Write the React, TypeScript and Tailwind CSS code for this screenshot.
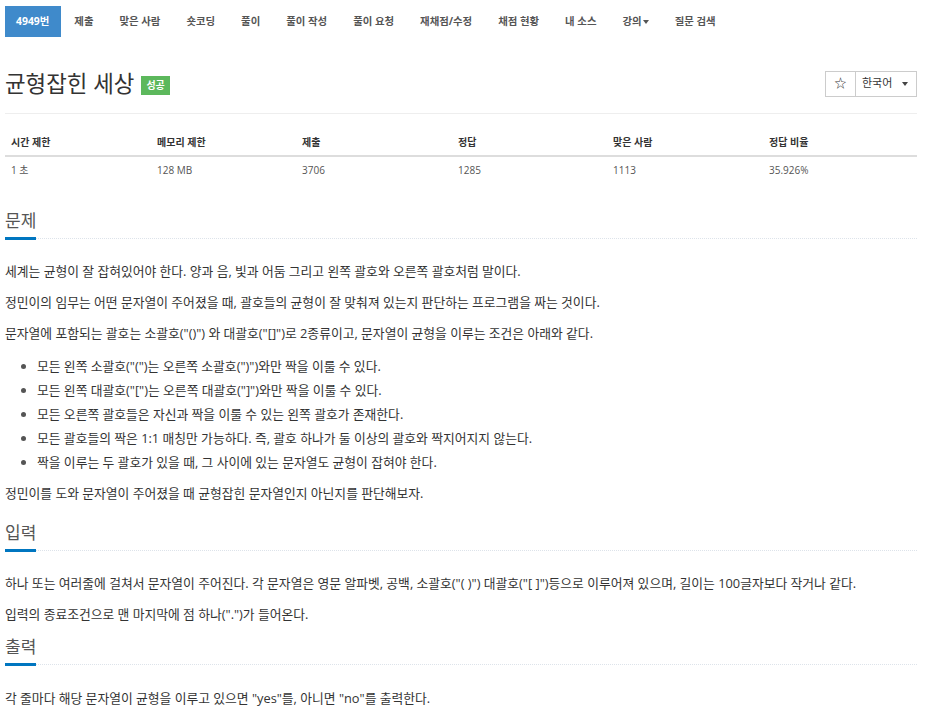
import React from "react";

const navItems = ["제출", "맞은 사람", "숏코딩", "풀이", "풀이 작성", "풀이 요청", "재채점/수정", "채점 현황", "내 소스"];

function Heading({ title, className }: { title: string; className: string }) {
  return (
    <div className={`flex border-b border-dotted border-[#dde3ea] ${className}`}>
      <div className="-mb-[2px] border-b-[3px] border-[#0076c0] pb-[4px] text-[17px] leading-[24px] text-[#555]">
        {title}
      </div>
    </div>
  );
}

export default function App() {
  const cols = ["w-[146px]", "w-[145px]", "w-[156px]", "w-[155px]", "w-[156px]", "flex-1"];
  const heads = ["시간 제한", "메모리 제한", "제출", "정답", "맞은 사람", "정답 비율"];
  const vals = ["1 초", "128 MB", "3706", "1285", "1113", "35.926%"];
  return (
    <div className="min-h-[709px] bg-white px-[5px] pr-[10px] font-['Open_Sans','Noto_Sans_CJK_KR',sans-serif] text-[#333]">
      {/* nav */}
      <div className="flex items-center pt-[6px]">
        <div className="flex h-[31px] items-center bg-[#3f8acb] pl-[11px] pr-[12px] text-[10.4px] font-bold text-white">4949번</div>
        {navItems.map((n) => (
          <div key={n} className="px-[13px] text-[10.4px] font-bold text-[#555]">
            {n}
          </div>
        ))}
        <div className="flex items-center px-[13px] text-[10.4px] font-bold text-[#555]">
          강의
          <span className="ml-[1px] mt-[1px] h-0 w-0 border-x-[3px] border-t-[4px] border-x-transparent border-t-[#555]" />
        </div>
        <div className="px-[13px] text-[10.4px] font-bold text-[#555]">질문 검색</div>
      </div>

      {/* title */}
      <div className="mt-[33px] flex h-[27px] items-center justify-between">
        <div className="flex items-center">
          <span className="text-[22.4px] leading-[27px] text-[#333]">균형잡힌 세상</span>
          <span className="ml-[7px] mt-[3px] flex h-[19px] items-center bg-[#5cb85c] px-[5px] text-[10px] font-bold text-white">성공</span>
        </div>
        <div className="flex h-[26px] border border-[#ccc] text-[11px]">
          <div className="flex w-[30px] items-center justify-center border-r border-[#ccc] text-[12px] text-[#333]">☆</div>
          <div className="flex w-[60px] items-center pl-[6px] text-[#333]">
            한국어
            <span className="ml-[10px] mt-[1px] h-0 w-0 border-x-[3px] border-t-[4px] border-x-transparent border-t-[#444]" />
          </div>
        </div>
      </div>
      <div className="mt-[16px] border-b border-[#eee]" />

      {/* table */}
      <div className="mt-[15px] flex h-[28px] items-center border-b-2 border-[#ddd] text-[10px] font-bold text-[#333]">
        {heads.map((h, i) => (
          <div key={h} className={`${cols[i]} pl-[6px]`}>{h}</div>
        ))}
      </div>
      <div className="flex h-[27px] items-center text-[10px] text-[#555]">
        {vals.map((v, i) => (
          <div key={i} className={`${cols[i]} pl-[6px]`}>{v}</div>
        ))}
      </div>

      <Heading title="문제" className="mt-[25px]" />
      <div className="text-[12.8px] leading-[20px] text-[#333]">
        <p className="mt-[22px]">세계는 균형이 잘 잡혀있어야 한다. 양과 음, 빛과 어둠 그리고 왼쪽 괄호와 오른쪽 괄호처럼 말이다.</p>
        <p className="mt-[11px]">정민이의 임무는 어떤 문자열이 주어졌을 때, 괄호들의 균형이 잘 맞춰져 있는지 판단하는 프로그램을 짜는 것이다.</p>
        <p className="mt-[11px]">문자열에 포함되는 괄호는 소괄호("()") 와 대괄호("[]")로 2종류이고, 문자열이 균형을 이루는 조건은 아래와 같다.</p>
        <ul className="mt-[11px] list-disc pl-[32px] leading-[24px] marker:text-[#555]">
          <li>모든 왼쪽 소괄호("(")는 오른쪽 소괄호(")")와만 짝을 이룰 수 있다.</li>
          <li>모든 왼쪽 대괄호("[")는 오른쪽 대괄호("]")와만 짝을 이룰 수 있다.</li>
          <li>모든 오른쪽 괄호들은 자신과 짝을 이룰 수 있는 왼쪽 괄호가 존재한다.</li>
          <li>모든 괄호들의 짝은 1:1 매칭만 가능하다. 즉, 괄호 하나가 둘 이상의 괄호와 짝지어지지 않는다.</li>
          <li>짝을 이루는 두 괄호가 있을 때, 그 사이에 있는 문자열도 균형이 잡혀야 한다.</li>
        </ul>
        <p className="mt-[9px]">정민이를 도와 문자열이 주어졌을 때 균형잡힌 문자열인지 아닌지를 판단해보자.</p>
      </div>

      <Heading title="입력" className="mt-[18px]" />
      <div className="text-[12.8px] leading-[20px] text-[#333]">
        <p className="mt-[22px]">하나 또는 여러줄에 걸쳐서 문자열이 주어진다. 각 문자열은 영문 알파벳, 공백, 소괄호("( )") 대괄호("[ ]")등으로 이루어져 있으며, 길이는 100글자보다 작거나 같다.</p>
        <p className="mt-[11px]">입력의 종료조건으로 맨 마지막에 점 하나(".")가 들어온다.</p>
      </div>

      <Heading title="출력" className="mt-[11px]" />
      <div className="text-[12.8px] leading-[20px] text-[#333]">
        <p className="mt-[23px]">각 줄마다 해당 문자열이 균형을 이루고 있으면 "yes"를, 아니면 "no"를 출력한다.</p>
      </div>
    </div>
  );
}
